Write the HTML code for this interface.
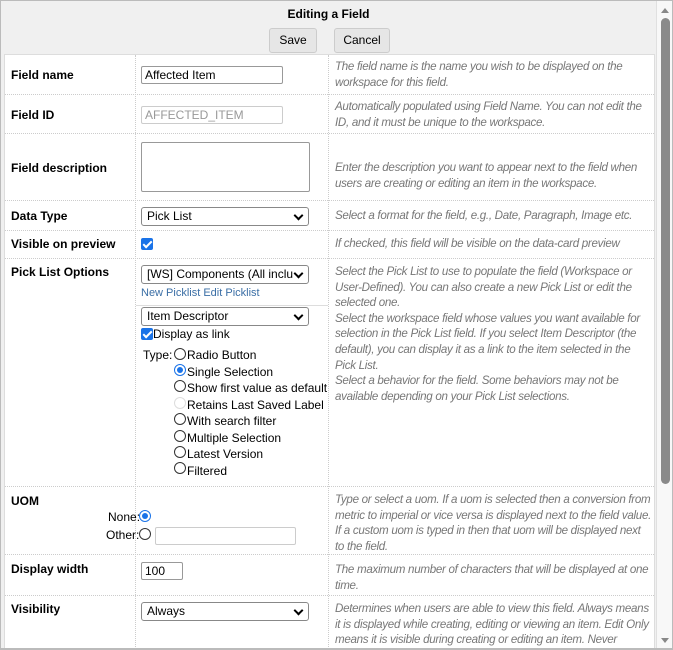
<!DOCTYPE html>
<html style="overflow:hidden;width:673px;height:650px"><head><style>
*{box-sizing:border-box;margin:0;padding:0}
body{width:673px;height:650px;overflow:hidden;background:#f0f0f0;font-family:"Liberation Sans",Arial,sans-serif;font-size:12px;color:#000;position:relative}
.a{position:absolute}
.lbl{position:absolute;left:11px;font-weight:bold;font-size:12px}
.d{position:absolute;left:335px;width:340px;white-space:nowrap;font-style:italic;color:#777;font-size:11.6px;letter-spacing:-0.3px;line-height:15.6px}
.hl{position:absolute;left:5px;width:649px;border-top:1px dotted #ccc}
.inp{position:absolute;background:#fff;border:1px solid #999;border-radius:2px;font-size:12px;padding:1px 3px;line-height:14px}
.sel{position:absolute;background:#fff;border:1px solid #888;border-radius:3px;font-size:12px;padding:2px 5px;line-height:13px;height:19px;white-space:nowrap;overflow:hidden}
.sel:after{content:"";position:absolute;right:6px;top:4px;width:5px;height:5px;border-right:2px solid #000;border-bottom:2px solid #000;transform:rotate(45deg)}
.rad{position:absolute;width:12px;height:12px;border:1px solid #333;border-radius:50%;background:#fff}
.on{border-color:#1a73e8}
.on:after{content:"";position:absolute;left:2px;top:2px;width:6px;height:6px;border-radius:50%;background:#1a73e8}
.cb{position:absolute;width:12px;height:12px;background:#1a73e8;border-radius:2px}
.cb:after{content:"";position:absolute;left:4px;top:1px;width:3px;height:7px;border-right:2px solid #fff;border-bottom:2px solid #fff;transform:rotate(45deg)}
.rt{position:absolute;left:187px;font-size:12px}
</style></head><body>
<div class="a" style="left:4px;top:54px;width:651px;height:600px;background:#fff;border:1px solid #ddd"></div>
<div class="a" style="left:0;top:0;width:673px;height:650px;border:1px solid #bbb"></div>
<div class="a" style="left:0;top:7px;width:657px;text-align:center;font-weight:bold;font-size:12px">Editing a Field</div>
<div class="a" style="left:269px;top:28px;width:48px;height:25px;background:#e6e6e6;border:1px solid #ccc;border-radius:3px;text-align:center;line-height:23px">Save</div>
<div class="a" style="left:334px;top:28px;width:56px;height:25px;background:#e6e6e6;border:1px solid #ccc;border-radius:3px;text-align:center;line-height:23px">Cancel</div>
<div class="a" style="left:135px;top:55px;height:600px;border-left:1px dotted #ccc"></div>
<div class="a" style="left:328px;top:55px;height:600px;border-left:1px dotted #ccc"></div>
<div class="hl" style="top:94px"></div><div class="hl" style="top:133px"></div><div class="hl" style="top:200px"></div><div class="hl" style="top:230px"></div><div class="hl" style="top:258px"></div><div class="hl" style="top:486px"></div><div class="hl" style="top:554px"></div><div class="hl" style="top:595px"></div>

<div class="lbl" style="top:68px">Field name</div>
<div class="lbl" style="top:108px">Field ID</div>
<div class="lbl" style="top:161px">Field description</div>
<div class="lbl" style="top:209px">Data Type</div>
<div class="lbl" style="top:237px">Visible on preview</div>
<div class="lbl" style="top:265px">Pick List Options</div>
<div class="lbl" style="top:494px">UOM</div>
<div class="lbl" style="top:562px">Display width</div>
<div class="lbl" style="top:602px">Visibility</div>

<div class="inp" style="left:141px;top:66px;width:142px;height:18px">Affected Item</div>
<div class="inp" style="left:141px;top:106px;width:142px;height:18px;color:#999;border-color:#ccc">AFFECTED_ITEM</div>
<div class="inp" style="left:141px;top:142px;width:169px;height:50px"></div>
<div class="sel" style="left:141px;top:207px;width:168px">Pick List</div>
<div class="cb" style="left:141px;top:238px"></div>
<div class="sel" style="left:141px;top:265px;width:168px"><span style="display:inline-block;width:146px;overflow:hidden">[WS] Components (All includin</span></div>
<div class="a" style="left:141px;top:287px;color:#3a6ea5;font-size:11px">New Picklist Edit Picklist</div>
<div class="a" style="left:136px;top:305px;width:192px;border-top:1px solid #ddd"></div>
<div class="sel" style="left:141px;top:307px;width:168px">Item Descriptor</div>
<div class="cb" style="left:141px;top:328px"></div>
<div class="a" style="left:153px;top:327px">Display as link</div>
<div class="a" style="left:143px;top:348px">Type:</div>
<div class="rad" style="left:174px;top:348px"></div><div class="rt" style="top:348px">Radio Button</div>
<div class="rad on" style="left:174px;top:364px"></div><div class="rt" style="top:365px">Single Selection</div>
<div class="rad" style="left:174px;top:380px"></div><div class="rt" style="top:381px">Show first value as default</div>
<div class="rad" style="left:174px;top:397px;border-color:#ddd"></div><div class="rt" style="top:398px">Retains Last Saved Label</div>
<div class="rad" style="left:174px;top:413px"></div><div class="rt" style="top:414px">With search filter</div>
<div class="rad" style="left:174px;top:430px"></div><div class="rt" style="top:431px">Multiple Selection</div>
<div class="rad" style="left:174px;top:446px"></div><div class="rt" style="top:447px">Latest Version</div>
<div class="rad" style="left:174px;top:462px"></div><div class="rt" style="top:464px">Filtered</div>

<div class="a" style="left:108px;top:510px">None:</div>
<div class="rad on" style="left:139px;top:510px"></div>
<div class="a" style="left:106px;top:528px">Other:</div>
<div class="rad" style="left:139px;top:528px"></div>
<div class="inp" style="left:155px;top:527px;width:141px;height:18px;border-color:#ccc"></div>
<div class="inp" style="left:141px;top:562px;width:42px;height:18px">100</div>
<div class="sel" style="left:141px;top:602px;width:168px">Always</div>

<div class="d" style="top:59px">The field name is the name you wish to be displayed on the<br>workspace for this field.</div>
<div class="d" style="top:99px">Automatically populated using Field Name. You can not edit the<br>ID, and it must be unique to the workspace.</div>
<div class="d" style="top:160px">Enter the description you want to appear next to the field when<br>users are creating or editing an item in the workspace.</div>
<div class="d" style="top:208px">Select a format for the field, e.g., Date, Paragraph, Image etc.</div>
<div class="d" style="top:236px">If checked, this field will be visible on the data-card preview</div>
<div class="d" style="top:264px">Select the Pick List to use to populate the field (Workspace or<br>User-Defined). You can also create a new Pick List or edit the<br>selected one.<br>Select the workspace field whose values you want available for<br>selection in the Pick List field. If you select Item Descriptor (the<br>default), you can display it as a link to the item selected in the<br>Pick List.<br>Select a behavior for the field. Some behaviors may not be<br>available depending on your Pick List selections.</div>
<div class="d" style="top:492px">Type or select a uom. If a uom is selected then a conversion from<br>metric to imperial or vice versa is displayed next to the field value.<br>If a custom uom is typed in then that uom will be displayed next<br>to the field.</div>
<div class="d" style="top:562px">The maximum number of characters that will be displayed at one<br>time.</div>
<div class="d" style="top:601px">Determines when users are able to view this field. Always means<br>it is displayed while creating, editing or viewing an item. Edit Only<br>means it is visible during creating or editing an item. Never<br>means it is not displayed in the user interface at all times. "Never"</div>

<div class="a" style="left:656px;top:1px;width:16px;height:648px;background:#f8f8f8;border-left:1px solid #e0e0e0"></div>
<div class="a" style="left:661px;top:8px;width:0;height:0;border-left:4px solid transparent;border-right:4px solid transparent;border-bottom:5px solid #888"></div>
<div class="a" style="left:661px;top:18px;width:9px;height:466px;background:#8a8a8a;border-radius:5px"></div>
<div class="a" style="left:661px;top:638px;width:0;height:0;border-left:4px solid transparent;border-right:4px solid transparent;border-top:5px solid #888"></div>
<div class="a" style="left:0;top:648px;width:673px;height:2px;background:#bbb"></div>
</body></html>
